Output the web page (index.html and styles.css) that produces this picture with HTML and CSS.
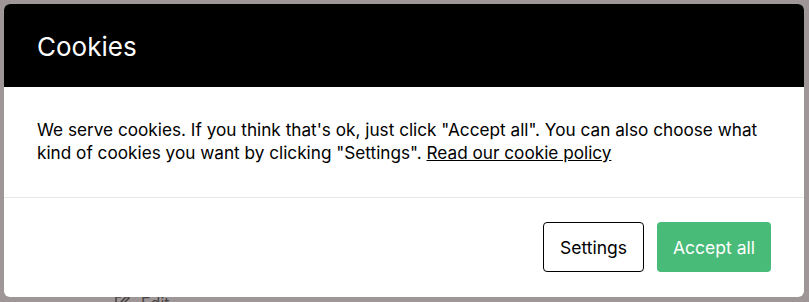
FILE: index.html
```html
<!DOCTYPE html>
<html lang="en">

<head>
    <meta charset="UTF-8">
    <meta name="viewport" content="width=device-width, initial-scale=1.0">
    <title>Cookies</title>
    <link rel="stylesheet" href="styles.css">
</head>

<body>
    <div class="page">
        <div class="behind">
            <svg class="edit_icon" width="18" height="18" viewBox="0 0 18 18">
                <path d="M8 3H3v12h12v-5" fill="none" stroke="#4a4545" stroke-width="1.6"/>
                <path d="M7 11l1-3 6-6 2 2-6 6z" fill="none" stroke="#4a4545" stroke-width="1.6"/>
            </svg>
            <span>Edit</span>
        </div>
        <div class="modal">
            <div class="modal_head">
                <h1>Cookies</h1>
            </div>
            <div class="modal_body">
                <p>We serve cookies. If you think that's ok, just click "Accept all". You can also choose what kind of cookies you want by clicking "Settings". <a href="javascript:;">Read our cookie policy</a></p>
            </div>
            <div class="modal_foot">
                <a href="javascript:;" class="btn btn_settings">Settings</a>
                <a href="javascript:;" class="btn btn_accept">Accept all</a>
            </div>
        </div>
    </div>
</body>

</html>
```

FILE: styles.css
```css
* {
    margin: 0;
    padding: 0;
    box-sizing: border-box;
}

body {
    background: #9e9697;
    font-family: Inter, "Liberation Sans", sans-serif;
    color: #000;
    overflow: hidden;
}

.page {
    position: relative;
    width: 809px;
    height: 302px;
    padding: 4px 5px 5px 4px;
}

.behind {
    position: absolute;
    left: 113px;
    top: 293px;
    display: flex;
    align-items: center;
    gap: 10px;
    color: #4a4545;
    font-size: 16px;
}

.modal {
    position: relative;
    width: 800px;
    height: 293px;
    background: #fff;
    border-radius: 6px;
    overflow: hidden;
    display: flex;
    flex-direction: column;
}

.modal_head {
    height: 83px;
    background: #000;
    padding: 0 33px;
    display: flex;
    align-items: center;
}

.modal_head h1 {
    color: #fff;
    font-size: 26px;
    font-weight: 400;
    line-height: 30px;
    padding-top: 2px;
}

.modal_body {
    height: 110px;
    padding: 31px 33px 0;
}

.modal_body p {
    font-size: 17.2px;
    line-height: 23px;
}

.modal_body a {
    color: #000;
    text-decoration: underline;
}

.modal_foot {
    flex: 1;
    border-top: 1px solid #e6e6e6;
    padding: 24px 33px 0;
    display: flex;
    justify-content: flex-end;
    gap: 13px;
}

.btn {
    height: 50px;
    display: flex;
    align-items: center;
    justify-content: center;
    font-size: 17.5px;
    text-decoration: none;
    border-radius: 4px;
}

.btn_settings {
    width: 101px;
    border: 1px solid #000;
    color: #000;
    background: #fff;
}

.btn_accept {
    width: 114px;
    background: #48bb78;
    color: #fff;
}
```
